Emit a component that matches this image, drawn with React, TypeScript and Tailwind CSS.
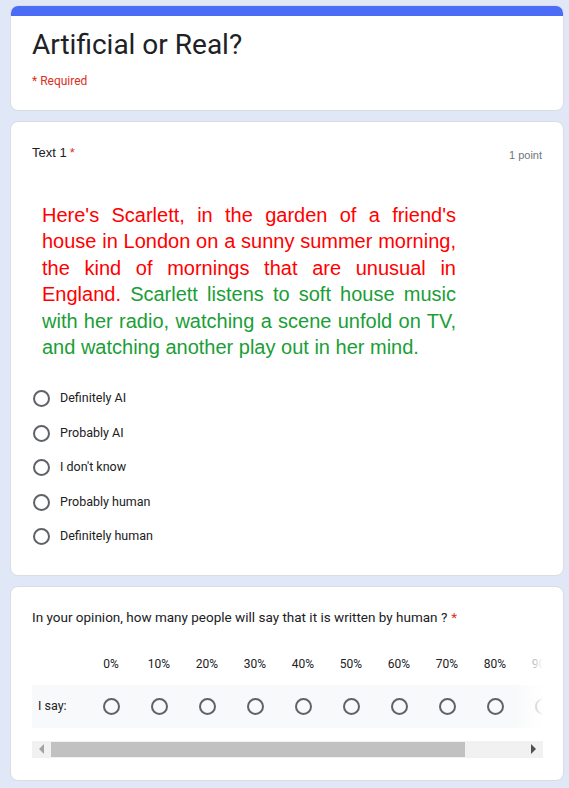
import React from "react";

const options = ["Definitely AI", "Probably AI", "I don't know", "Probably human", "Definitely human"];
const percents = ["0%", "10%", "20%", "30%", "40%", "50%", "60%", "70%", "80%", "90%", "100%"];

export default function App() {
  return (
    <div className="min-h-[788px] w-[569px] bg-[#e0e8f8] pt-[5px] pb-[10px]" style={{ fontFamily: "Roboto, 'Noto Sans', sans-serif" }}>
      <div className="ml-[10px] flex w-[554px] flex-col gap-[10px]">
        {/* Header card */}
        <div className="overflow-hidden rounded-lg border border-[#dadce0] bg-white">
          <div className="h-[10px] bg-[#4a6cf7]" />
          <div className="px-[21px] pt-[11px] pb-[21px]">
            <div className="text-[28px] leading-[36px] text-[#202124]" style={{ fontFamily: "Roboto, sans-serif" }}>
              Artificial or Real?
            </div>
            <div className="mt-[10px] text-[12px] leading-[16px] text-[#d93025]">* Required</div>
          </div>
        </div>

        {/* Question card */}
        <div className="rounded-lg border border-[#dadce0] bg-white px-[21px] pt-[23px] pb-[21px]">
          <div className="flex items-start justify-between">
            <div className="text-[13px] leading-[16px] text-[#202124]" style={{ fontFamily: "'Liberation Sans', Arial, sans-serif" }}>
              Text 1<span className="ml-[3px] text-[#d93025]">*</span>
            </div>
            <div className="pt-[3px] text-[11px] leading-[14px] text-[#70757a]" style={{ fontFamily: "'Liberation Sans', Arial, sans-serif" }}>
              1 point
            </div>
          </div>
          <p
            className="mt-[40px] ml-[10px] w-[414px] text-justify text-[20px] leading-[26.4px]"
            style={{ fontFamily: "'Liberation Sans', Arial, sans-serif" }}
          >
            <span className="text-[#ff0000]">
              Here's Scarlett, in the garden of a friend's house in London on a sunny summer morning, the kind of mornings that are unusual in England.
            </span>{" "}
            <span className="text-[#1a9e36]">
              Scarlett listens to soft house music with her radio, watching a scene unfold on TV, and watching another play out in her mind.
            </span>
          </p>
          <div className="mt-[21px] flex flex-col">
            {options.map((o) => (
              <div key={o} className="flex h-[34.5px] items-center">
                <span className="ml-[1px] inline-block h-[17px] w-[17px] rounded-full border-2 border-[#5f6368]" />
                <span className="ml-[10px] text-[12.5px] text-[#202124]">{o}</span>
              </div>
            ))}
          </div>
        </div>

        {/* Grid card */}
        <div className="rounded-lg border border-[#dadce0] bg-white px-[21px] pt-[20px] pb-[22px]">
          <div className="text-[13.5px] leading-[20px] text-[#202124]">
            In your opinion, how many people will say that it is written by human ?
            <span className="ml-[4px] text-[#d93025]">*</span>
          </div>
          <div className="relative mt-[16px] w-[511px] overflow-hidden">
            <div className="flex h-[42px] w-max items-center">
              <div className="w-[55px]" />
              {percents.map((p) => (
                <div key={p} className="w-[48px] text-center text-[12px] text-[#202124]">
                  {p}
                </div>
              ))}
            </div>
            <div className="flex h-[43px] w-max items-center bg-[#f8f9fa]">
              <div className="w-[55px] pl-[6px] text-[12.5px] text-[#202124]">I say:</div>
              {percents.map((p) => (
                <div key={p} className="flex w-[48px] justify-center">
                  <span className="inline-block h-[17px] w-[17px] rounded-full border-2 border-[#5f6368]" />
                </div>
              ))}
            </div>
            <div className="pointer-events-none absolute top-0 right-0 h-full w-[30px] bg-gradient-to-r from-transparent to-white" />
          </div>
          {/* fake scrollbar */}
          <div className="mt-[13px] flex h-[17px] w-[511px] items-center bg-[#f1f1f1]">
            <div className="flex w-[19px] justify-center">
              <span className="h-0 w-0 border-y-[5px] border-r-[5px] border-y-transparent border-r-[#a3a3a3]" />
            </div>
            <div className="h-[15px] w-[414px] bg-[#c1c1c1]" />
            <div className="flex-1" />
            <div className="flex w-[19px] justify-center">
              <span className="h-0 w-0 border-y-[5px] border-l-[5px] border-y-transparent border-l-[#505050]" />
            </div>
          </div>
        </div>
      </div>
    </div>
  );
}
